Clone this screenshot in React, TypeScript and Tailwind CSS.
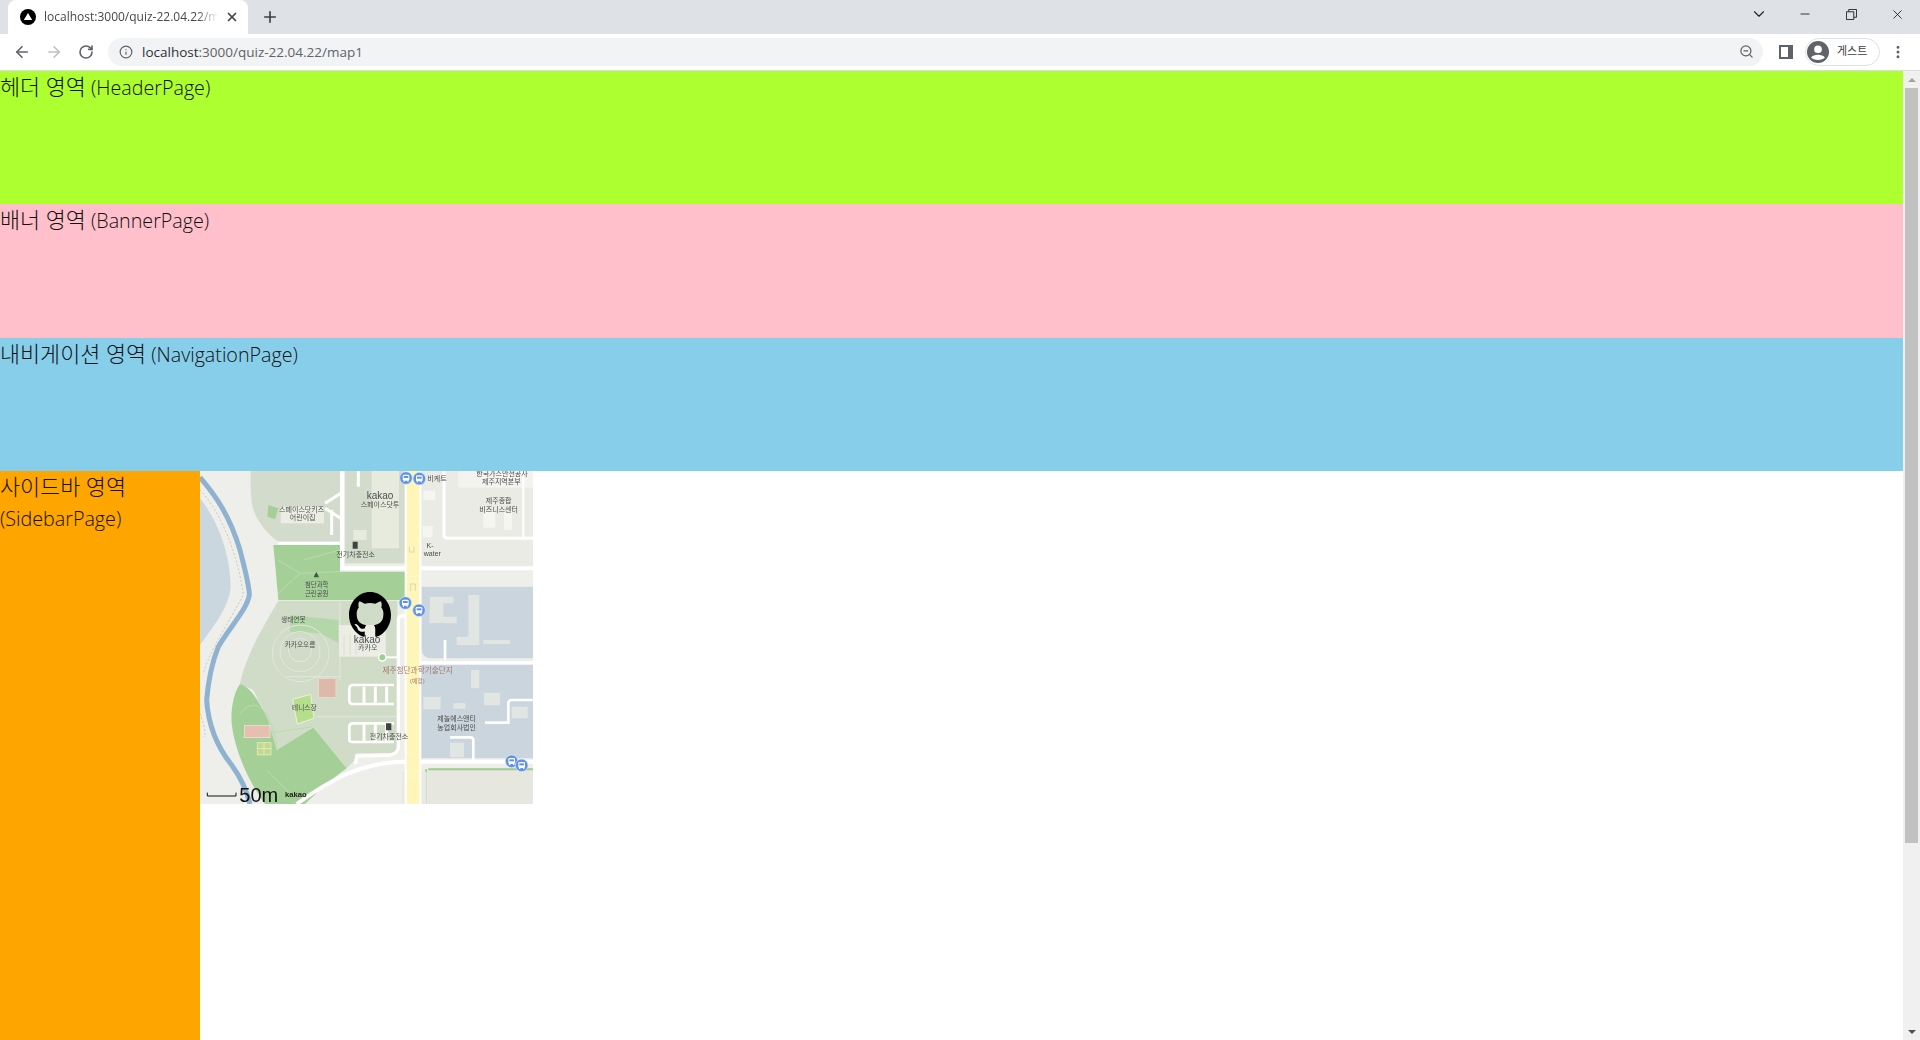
import { ArrowLeft, ArrowRight, ChevronDown, EllipsisVertical, Info, Minus, Plus, RotateCw, X, ZoomOut } from 'lucide-react'

const githubMark =
  'M8 0C3.58 0 0 3.58 0 8c0 3.54 2.29 6.53 5.47 7.59.4.07.55-.17.55-.38 0-.19-.01-.82-.01-1.49-2.01.37-2.53-.49-2.69-.94-.09-.23-.48-.94-.82-1.13-.28-.15-.68-.52-.01-.53.63-.01 1.08.58 1.23.82.72 1.21 1.87.87 2.33.66.07-.52.28-.87.51-1.07-1.78-.2-3.64-.89-3.64-3.95 0-.87.31-1.59.82-2.15-.08-.2-.36-1.02.08-2.12 0 0 .67-.21 2.2.82.64-.18 1.32-.27 2-.27.68 0 1.36.09 2 .27 1.53-1.04 2.2-.82 2.2-.82.44 1.1.16 1.92.08 2.12.51.56.82 1.27.82 2.15 0 3.07-1.87 3.75-3.65 3.95.29.25.54.73.54 1.48 0 1.07-.01 1.93-.01 2.2 0 .21.15.46.55.38A8.013 8.013 0 0016 8c0-4.42-3.58-8-8-8z'

const buses = [
  [648, 54],
  [688, 56],
  [646, 429],
  [687, 451],
  [965, 904],
  [995, 916],
]

const labels: [number, number, string, number?, string?][] = [
  [335, 156, '스페이스닷키즈'],
  [338, 181, '어린이집'],
  [570, 116, 'kakao', 30],
  [570, 142, '스페이스닷투'],
  [926, 128, '제주종합'],
  [926, 155, '비즈니스센터'],
  [936, 49, '한국가스안전공사'],
  [934, 73, '제주지역본부'],
  [741, 63, '비케트'],
  [497, 292, '전기차충전소'],
  [720, 264, 'K-'],
  [727, 289, 'water'],
  [380, 380, '첨단과학', 19],
  [380, 407, '근린공원', 19],
  [310, 485, '생태연못', 20],
  [330, 561, '카카오오름', 20],
  [531, 549, 'kakao', 30],
  [533, 571, '카카오'],
  [683, 640, '제주첨단과학기술단지', 23, '#a07a74'],
  [682, 668, '(예정)', 18, '#a07a74'],
  [343, 750, '테니스장', 20],
  [597, 837, '전기차충전소'],
  [800, 784, '제놀에스앤티'],
  [800, 810, '농업회사법인'],
]

function MapPanel() {
  return (
    <div className="relative w-[333px] h-[333px] overflow-hidden shrink-0 font-normal">
      <svg viewBox="30 33 999 999" className="block w-[333px] h-[333px] blur-[0.5px]">
        <rect x="30" y="33" width="999" height="999" fill="#eeefeb" />
        {/* lake and river */}
        <path d="M30 115 C70 165 120 260 122 380 C118 440 70 500 30 555 Z" fill="#cbd7de" />
        <path d="M30 52 C80 110 120 170 150 270 C165 330 178 375 178 405 C170 450 120 500 85 560 C65 610 55 660 50 720 C55 800 85 865 125 915 C150 950 170 990 180 1032" fill="none" stroke="#8fb2d0" strokeWidth="15" />
        <path d="M30 90 C80 140 140 260 160 405 C120 480 60 570 40 640 M30 760 C45 800 50 830 40 830" fill="none" stroke="#b5b5ad" strokeWidth="2" strokeDasharray="6 6" />
        {/* top blocks */}
        <path d="M182 33 H450 V245 H265 C235 225 205 190 190 150 C182 125 182 80 182 33 Z" fill="#d3dccc" />
        <rect x="465" y="33" width="185" height="277" fill="#d3dccc" />
        <rect x="545" y="33" width="82" height="232" fill="#e7ebde" />
        <rect x="490" y="210" width="40" height="30" fill="#e7ebde" />
        <path d="M235 135 L265 145 L255 178 L232 170 Z" fill="#a4d098" />
        <rect x="272" y="140" width="130" height="50" fill="#eceee6" />
        <rect x="695" y="33" width="334" height="292" fill="#eaebe4" />
        <rect x="805" y="33" width="224" height="50" fill="#f3f3ef" />
        <path d="M762 33 V225 Q762 235 775 235 H1029" fill="none" stroke="#fff" strokeWidth="9" />
        <path d="M1000 33 V235" fill="none" stroke="#fff" strokeWidth="6" />
        <rect x="880" y="155" width="36" height="48" fill="#f5f5f1" />
        <rect x="942" y="150" width="24" height="60" fill="#f5f5f1" />
        <rect x="700" y="92" width="36" height="28" fill="#f5f5f1" />
        <rect x="698" y="198" width="30" height="34" fill="#f5f5f1" />
        {/* parks */}
        <path d="M250 255 H450 V335 H650 V420 H265 Z" fill="#a4d098" />
        <g fill="none" stroke="#b9dcae" strokeWidth="3">
          <path d="M265 300 L330 340 L265 400 M330 340 L450 335 M340 300 L450 270" />
        </g>
        <path d="M265 422 H622 V880 H500 L490 905 L470 925 L370 800 L260 870 L235 780 L190 690 L150 672 C165 590 225 490 265 422 Z" fill="#d0dbc8" />
        <path d="M150 672 C180 680 205 720 235 780 L260 870 L370 802 L470 925 C420 960 380 1000 345 1032 H225 C180 970 135 880 125 790 C122 750 130 700 150 672 Z" fill="#a4d098" />
        <path d="M300 465 L445 480 V548 L390 520 L300 515 Z" fill="#aed6a2" opacity="0.85" />
        <g fill="none" stroke="#e2e8dc" strokeWidth="3">
          <circle cx="330" cy="570" r="35" />
          <circle cx="330" cy="575" r="60" />
          <circle cx="332" cy="580" r="85" />
          <path d="M450 420 V660 M290 650 L450 650 M380 770 H620" />
        </g>
        <g fill="none" stroke="#b9dcae" strokeWidth="3">
          <path d="M150 760 C200 700 250 760 260 870 M160 830 L370 800 M230 930 L300 1000" />
        </g>
        <rect x="385" y="655" width="53" height="58" fill="#dcb9a8" stroke="#eadbcf" strokeWidth="3" />
        <path d="M308 718 L362 703 L372 775 L322 792 Z" fill="#b5de8d" stroke="#eef3d5" strokeWidth="3" />
        <rect x="163" y="797" width="77" height="36" fill="#e6bfb0" stroke="#f3e6dc" strokeWidth="2" />
        <path d="M202 848 H243 V885 H202 Z M222 848 V885 M202 866 H243" fill="#c4d98f" stroke="#f1f3cf" strokeWidth="2" />
        <rect x="447" y="495" width="140" height="95" fill="#eceee6" />
        <path d="M462 525 V585 M480 525 V585 M498 525 V585" stroke="#cfd6c7" strokeWidth="2" />
        {/* parking */}
        <path d="M612 675 H490 Q478 675 478 687 V722 Q478 732 490 732 H612 M612 790 H490 Q478 790 478 800 V840 Q478 846 490 846 H612" fill="none" stroke="#fff" strokeWidth="8" />
        <path d="M522 680 V728 M556 680 V728 M590 680 V728 M522 794 V842 M556 794 V842 M590 794 V842" stroke="#fff" strokeWidth="9" />
        {/* blue-grey blocks */}
        <path d="M695 380 H1029 V595 H725 Q695 595 695 565 Z" fill="#cbd5de" />
        <path d="M690 615 H1029 V895 H690 Z" fill="#cbd5de" />
        <path d="M720 410 H790 V430 H760 V470 H800 V490 H718 Z M835 405 H868 V555 H800 V530 H835 Z M880 540 H960 V552 H880 Z" fill="#e2e6e3" />
        <path d="M843 630 H868 V685 H843 Z M882 698 H930 V736 H882 Z M700 710 H752 V748 H700 Z M790 730 H826 V746 H790 Z M965 740 H1013 V775 H965 Z M780 848 H822 V892 H780 Z" fill="#e2e6e3" />
        <path d="M885 788 H955 V730 Q955 720 965 720 H1029 M780 832 H842 Q850 832 850 842 V900 M765 540 V600" fill="none" stroke="#fff" strokeWidth="8" />
        {/* bottom right */}
        <rect x="712" y="925" width="317" height="107" fill="#e6e7df" />
        <path d="M715 928 H1029 M708 928 L708 1032" fill="none" stroke="#9fcc90" strokeWidth="6" />
        <rect x="635" y="935" width="75" height="97" fill="#e9eae3" />
        {/* roads */}
        <g fill="none" stroke="#fff">
          <path d="M456 33 V325 H1029" strokeWidth="12" />
          <path d="M265 250 H450" strokeWidth="9" />
          <path d="M405 130 L460 95 M405 145 L460 180 M425 150 V225 M505 33 V80" strokeWidth="9" />
          <path d="M690 608 H1029" strokeWidth="9" />
          <path d="M650 468 H638 Q625 468 625 480 V860 Q625 880 600 885 L500 888 L497 912" strokeWidth="10" />
          <path d="M575 592 H625" strokeWidth="6" />
          <path d="M320 1032 C420 960 510 908 640 905 H1029" strokeWidth="12" />
        </g>
        {/* main road */}
        <rect x="644" y="33" width="50" height="999" fill="#fff" />
        <rect x="650" y="33" width="38" height="999" fill="#fdf6b8" />
        <g stroke="#ffffff" strokeWidth="2" strokeDasharray="4 7">
          <path d="M650 350 H688 M650 364 H688 M650 880 H688 M650 935 H688 M650 950 H688" />
        </g>
        <path d="M658 260 V276 H672 V260 M662 392 V372 H676 V392" fill="none" stroke="#d9d3a0" strokeWidth="2.5" />
        <circle cx="577" cy="592" r="13" fill="#fff" />
        <circle cx="577" cy="592" r="9" fill="#9dd08f" />
        {/* charger and tree markers */}
        <path d="M488 245 H503 V266 H488 Z M588 790 H604 V811 H588 Z" fill="#3f4240" />
        <path d="M379 335 L387 352 H371 Z" fill="#3f5a3f" />
        {labels.map(([x, y, text, size, color]) => (
          <text
            key={text + x}
            x={x}
            y={y}
            textAnchor="middle"
            fontFamily='"Liberation Sans","Noto Sans CJK KR",sans-serif'
            fontSize={size ?? 21}
            fill={color ?? '#4a4d4a'}
          >
            {text}
          </text>
        ))}
        {buses.map(([x, y]) => (
          <g key={`${x}-${y}`}>
            <circle cx={x} cy={y} r="19" fill="#5f92e6" stroke="#e9eef5" strokeWidth="2" />
            <rect x={x - 10} y={y - 10} width="20" height="18" rx="4" fill="#fff" />
            <rect x={x - 7} y={y - 6} width="14" height="6" fill="#5f92e6" />
            <rect x={x - 8} y={y + 8} width="4" height="3" fill="#fff" />
            <rect x={x + 4} y={y + 8} width="4" height="3" fill="#fff" />
          </g>
        ))}
        {/* scale + copyright */}
        <path d="M52 998 V1008 H138 V998" fill="none" stroke="#111" strokeWidth="3" />
        <text x="285" y="1012" fontFamily='"Liberation Sans",sans-serif' fontSize="23" fontWeight="700" fill="#222">
          kakao
        </text>
        <text x="148" y="1026" fontFamily='"Liberation Sans",sans-serif' fontSize="60" fill="#111">
          50m
        </text>
      </svg>
      <svg
        viewBox="0 0 16 16"
        preserveAspectRatio="none"
        className="absolute left-[149px] top-[121px] w-[42px] h-[46px]"
      >
        <path d={githubMark} fill="#000" fillRule="evenodd" />
      </svg>
    </div>
  )
}

function Browser() {
  return (
    <div className="h-[71px] shrink-0 bg-white" style={{ fontFamily: '"Open Sans","Noto Sans CJK KR",sans-serif' }}>
      <div className="h-[34px] bg-[#dee1e6] flex items-end pl-2 text-[#202124]">
        <div className="w-[240px] h-[34px] bg-white rounded-t-lg flex items-center pl-[12px] pr-[9px]">
          <svg viewBox="0 0 16 16" className="w-4 h-4 mr-[8px] shrink-0">
            <circle cx="8" cy="8" r="8" fill="#000" />
            <path d="M8 4 L12.2 11 H3.8 Z" fill="#fff" />
          </svg>
          <div className="w-[174px] overflow-hidden whitespace-nowrap text-[12px] text-[#45474a] [mask-image:linear-gradient(to_right,black_88%,transparent)]">
            localhost:3000/quiz-22.04.22/map1
          </div>
          <X className="w-[14px] h-[14px] ml-auto text-[#45474a]" strokeWidth={3} />
        </div>
        <Plus className="w-[18px] h-[18px] ml-[13px] mb-[8px] text-[#3c4043]" strokeWidth={2.2} />
        <div className="ml-auto self-start h-[28px] flex items-center text-[#202124]">
          <ChevronDown className="w-[18px] h-[18px] mr-[14px]" strokeWidth={1.5} />
          <div className="w-[46px] flex justify-center">
            <Minus className="w-[14px] h-[14px]" strokeWidth={1.5} />
          </div>
          <div className="w-[46px] flex justify-center">
            <svg viewBox="0 0 12 12" className="w-[11px] h-[11px]" fill="none" stroke="currentColor">
              <path d="M0.5 3 H8.5 V11.5 H0.5 Z M3 3 V0.5 H11.5 V9 H8.5" />
            </svg>
          </div>
          <div className="w-[46px] flex justify-center">
            <X className="w-[15px] h-[15px]" strokeWidth={1.4} />
          </div>
        </div>
      </div>
      <div className="h-[37px] flex items-center border-b border-[#dadce0] pb-px">
        <ArrowLeft className="w-[18px] h-[18px] ml-[13px] text-[#5f6368]" strokeWidth={2.2} />
        <ArrowRight className="w-[18px] h-[18px] ml-[14px] text-[#bdc1c6]" strokeWidth={2.2} />
        <RotateCw className="w-[16px] h-[16px] ml-[15px] text-[#5f6368]" strokeWidth={2.4} />
        <div className="ml-[14px] w-[1655px] h-[28px] rounded-full bg-[#f1f3f4] flex items-center pl-[11px] pr-[9px]">
          <Info className="w-[14px] h-[14px] text-[#5f6368]" strokeWidth={2} />
          <span className="ml-[9px] text-[13.5px] text-[#5f6368] leading-[28px] pt-px">
            <span className="text-[#303134]">localhost</span>:3000/quiz-22.04.22/map1
          </span>
          <ZoomOut className="w-[15px] h-[15px] ml-auto text-[#5f6368]" strokeWidth={2} />
        </div>
        <div className="ml-[16px] w-[14px] h-[14px] border-[2px] border-r-[5px] border-[#5f6368] bg-white" />
        <div className="ml-[12px] w-[75px] h-[28px] rounded-full border border-[#dfe1e5] flex items-center pl-[1px]">
          <svg viewBox="0 0 24 24" className="w-[22px] h-[22px]">
            <circle cx="12" cy="12" r="12" fill="#5f6368" />
            <circle cx="12" cy="9" r="4.2" fill="#fff" />
            <path d="M4.5 18 C7 14 17 14 19.5 18 C17 21.5 7 21.5 4.5 18 Z" fill="#fff" />
          </svg>
          <span className="ml-[8px] text-[11px] text-[#3c4043]">게스트</span>
        </div>
        <EllipsisVertical className="w-[16px] h-[16px] ml-[10px] text-[#5f6368]" strokeWidth={2.5} />
      </div>
    </div>
  )
}

function Ko({ children }: { children: string }) {
  return <span className="text-[21.8px] leading-none">{children}</span>
}

export default function App() {
  return (
    <div className="w-[1920px] h-[1040px] flex flex-col overflow-hidden bg-white">
      <Browser />
      <div
        className="flex-1 min-h-0 flex text-[19.7px] font-light leading-[33px] text-[#111]"
        style={{ fontFamily: '"Open Sans","Noto Sans CJK KR",sans-serif' }}
      >
        <div className="flex-1 min-w-0 flex flex-col">
          <div className="h-[133px] bg-[#adff2f]">
            <Ko>헤더 영역</Ko> (HeaderPage)
          </div>
          <div className="h-[134px] bg-[#ffc0cb]">
            <Ko>배너 영역</Ko> (BannerPage)
          </div>
          <div className="h-[133px] bg-[#87ceeb]">
            <Ko>내비게이션 영역</Ko> (NavigationPage)
          </div>
          <div className="flex-1 flex">
            <aside className="w-[200px] bg-[#ffa500] pt-px leading-[31px]">
              <Ko>사이드바 영역</Ko> (SidebarPage)
            </aside>
            <MapPanel />
          </div>
        </div>
        <div className="w-[17px] bg-[#f0f0f0] flex flex-col items-center">
          <div className="h-[17px] flex items-center justify-center">
            <div className="border-x-[4px] border-x-transparent border-b-[4px] border-b-[#a3a3a3]" />
          </div>
          <div className="w-[13px] h-[755px] bg-[#c1c1c1]" />
          <div className="mt-auto h-[17px] flex items-center justify-center">
            <div className="border-x-[4px] border-x-transparent border-t-[4px] border-t-[#505050]" />
          </div>
        </div>
      </div>
    </div>
  )
}
